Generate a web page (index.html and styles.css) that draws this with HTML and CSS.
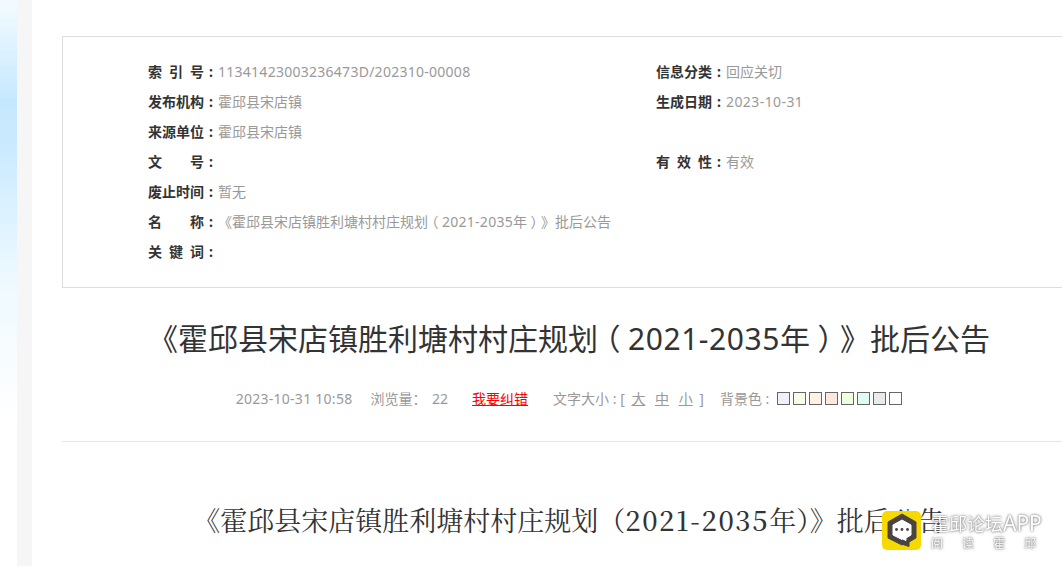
FILE: index.html
```html
<!DOCTYPE html>
<html lang="zh-CN">

<head>
  <meta charset="UTF-8" />
  <title>《霍邱县宋店镇胜利塘村村庄规划（2021-2035年）》批后公告</title>
  <link rel="stylesheet" href="styles.css">
</head>

<body>

  <!-- Side strips -->
  <div class="side-sky"></div>
  <div class="side-gray"></div>

  <div class="content">
    <!-- Info table -->
    <div class="info-box">
      <div class="info-row"><div class="info-cell"><span class="label">索 引 号</span><span class="colon">:</span><span class="value num">11341423003236473D/202310-00008</span></div><div class="info-cell"><span class="label">信息分类</span><span class="colon">:</span><span class="value">回应关切</span></div></div>
      <div class="info-row"><div class="info-cell"><span class="label">发布机构</span><span class="colon">:</span><span class="value">霍邱县宋店镇</span></div><div class="info-cell"><span class="label">生成日期</span><span class="colon">:</span><span class="value num date">2023-10-31</span></div></div>
      <div class="info-row"><div class="info-cell"><span class="label">来源单位</span><span class="colon">:</span><span class="value">霍邱县宋店镇</span></div></div>
      <div class="info-row"><div class="info-cell"><span class="label">文 号</span><span class="colon">:</span></div><div class="info-cell"><span class="label">有 效 性</span><span class="colon">:</span><span class="value">有效</span></div></div>
      <div class="info-row"><div class="info-cell"><span class="label">废止时间</span><span class="colon">:</span><span class="value">暂无</span></div></div>
      <div class="info-row"><div class="info-cell wide"><span class="label">名 称</span><span class="colon">:</span><span class="value">《霍邱县宋店镇胜利塘村村庄规划<span class="fw">（</span><span class="num">2021-2035</span>年<span class="fw">）</span>》批后公告</span></div></div>
      <div class="info-row"><div class="info-cell"><span class="label">关 键 词</span><span class="colon">:</span></div></div>
    </div>

    <h1 class="title">《霍邱县宋店镇胜利塘村村庄规划<span class="fw">（</span><span class="num">2021-2035</span>年<span class="fw">）</span>》批后公告</h1>

    <!-- Date, views, text size, background -->
    <div class="meta">
      <span class="num">2023-10-31 10:58</span>
      <span class="views">浏览量： 22</span>
      <a class="report" href="#">我要纠错</a>
      <span class="sizes">文字大小 : [ <a href="#">大</a> <a href="#">中</a> <a href="#">小</a> ]</span>
      <span class="bg-pick">背景色 :
        <i class="swatch s1"></i><i class="swatch s2"></i><i class="swatch s3"></i><i class="swatch s4"></i><i class="swatch s5"></i><i class="swatch s6"></i><i class="swatch s7"></i><i class="swatch s8"></i>
      </span>
    </div>

    <h2 class="doc-title">《霍邱县宋店镇胜利塘村村庄规划（<span class="doc-num">2021-2035</span>年）》批后公告</h2>
  </div>

  <!-- Floating app badge -->
  <div class="app-badge">
    <div class="app-icon">
      <svg width="39" height="39" viewBox="0 0 39 39">
        <path d="M20 3 L34 11 V27 L27 31 L27 35.5 L21 33.5 L20 34 L6 27 V11 Z" fill="#4a4440" stroke="#4a4440" stroke-linejoin="round" />
        <path d="M20 9 L29 14 V24 L24 27 V29.5 L20.5 28 L20 28.5 L11 24 V14 Z" fill="#fff" stroke="#fff" stroke-linejoin="round" />
        <circle cx="14.5" cy="18.5" r="1.4" fill="#4a4440" />
        <circle cx="20" cy="18.5" r="1.4" fill="#4a4440" />
        <circle cx="25.5" cy="18.5" r="1.4" fill="#4a4440" />
      </svg>
    </div>
    <div class="app-text">
      <div class="app-name">霍邱论坛<span class="app-latin">APP</span></div>
      <div class="app-sub">阅 读 霍 邱</div>
    </div>
  </div>

</body>

</html>
```

FILE: styles.css
```css
* {
  margin: 0;
  padding: 0;
  box-sizing: border-box;
}

html,
body {
  height: 100%;
  overflow: hidden;
}

body {
  display: flex;
  background: #fff;
  color: #333;
  font-family: "Noto Sans", "Noto Sans CJK SC", sans-serif;
  font-size: 14px;
}

a {
  color: inherit;
}

.side-sky {
  flex: 0 0 17px;
  background: linear-gradient(180deg, #f4fbff 0, #c6e8ff 100px, #c9e9ff 140px, #eef9ff 280px, #fff 420px);
}

.side-gray {
  flex: 0 0 15px;
  background: #f6f6f6;
}

.content {
  flex: 0 0 1014px;
  min-width: 0;
  margin-left: 30px;
  padding-top: 36px;
}

.info-box {
  border: 1px solid #ddd;
  padding: 19px 0 21px 85px;
}

.info-row {
  display: flex;
  height: 30px;
}

.info-cell {
  flex: 0 0 508px;
  display: flex;
  align-items: center;
  white-space: nowrap;
}

.info-cell.wide {
  flex-basis: 800px;
}

.label {
  width: 56px;
  color: #333;
  font-weight: bold;
  text-align: justify;
  text-align-last: justify;
}

.colon {
  width: 14px;
  color: #333;
  font-weight: bold;
  text-align: center;
}

.value {
  color: #999;
}

/* latin digits run a bit wider in the original */
.num {
  letter-spacing: 0.019em;
}

.date {
  letter-spacing: 0.03em;
}

/* centred full-width brackets */
.fw {
  display: inline-block;
  width: 1em;
  text-align: center;
  font-feature-settings: "halt";
}

.title {
  margin-top: 28px;
  height: 46px;
  line-height: 46px;
  text-align: center;
  color: #333;
  font-size: 30px;
  font-weight: normal;
  white-space: nowrap;
}

.meta {
  margin-top: 25px;
  height: 55px;
  line-height: 24px;
  padding-bottom: 31px;
  border-bottom: 1px solid #e5e5e5;
  display: flex;
  justify-content: center;
  align-items: center;
  color: #999;
  white-space: nowrap;
}

.views {
  margin-left: 18px;
  word-spacing: 2px;
}

.report {
  margin-left: 24px;
  color: #f00;
}

.sizes {
  margin-left: 25px;
}

.sizes a {
  margin: 0 3px;
}

.bg-pick {
  margin-left: 16px;
  display: flex;
  align-items: center;
  gap: 3px;
}

.swatch {
  width: 13px;
  height: 13px;
  border: 1px solid #666;
}

.s1 {
  margin-left: 5px;
  background: #eef1f8;
}

.s2 { background: #f8fbe8; }
.s3 { background: #fff2e2; }
.s4 { background: #ffe6df; }
.s5 { background: #f0fde0; }
.s6 { background: #e0fbf2; }
.s7 { background: #e9e9f0; }
.s8 { background: #fff; }

.doc-title {
  margin-top: 58px;
  height: 40px;
  line-height: 40px;
  text-align: center;
  color: #333;
  font-family: "Noto Serif CJK SC", "Liberation Serif", serif;
  font-size: 27px;
  font-weight: normal;
  white-space: nowrap;
}

.doc-num {
  letter-spacing: 1.6px;
  font-weight: 500;
}

.app-badge {
  position: fixed;
  left: 882px;
  top: 511px;
  display: flex;
  gap: 10px;
}

.app-icon {
  width: 39px;
  height: 39px;
  border-radius: 5px;
  background: #f7d900;
}

.app-text {
  color: #fff;
  text-shadow: 0 0 3px #666, 0 0 1px #888;
  white-space: nowrap;
}

.app-name {
  font-size: 18px;
  line-height: 22px;
  margin-top: 2px;
}

.app-latin {
  font-size: 21px;
  line-height: 20px;
}

.app-sub {
  margin-top: 2px;
  font-size: 12px;
  line-height: 14px;
  word-spacing: 16px;
}
```
